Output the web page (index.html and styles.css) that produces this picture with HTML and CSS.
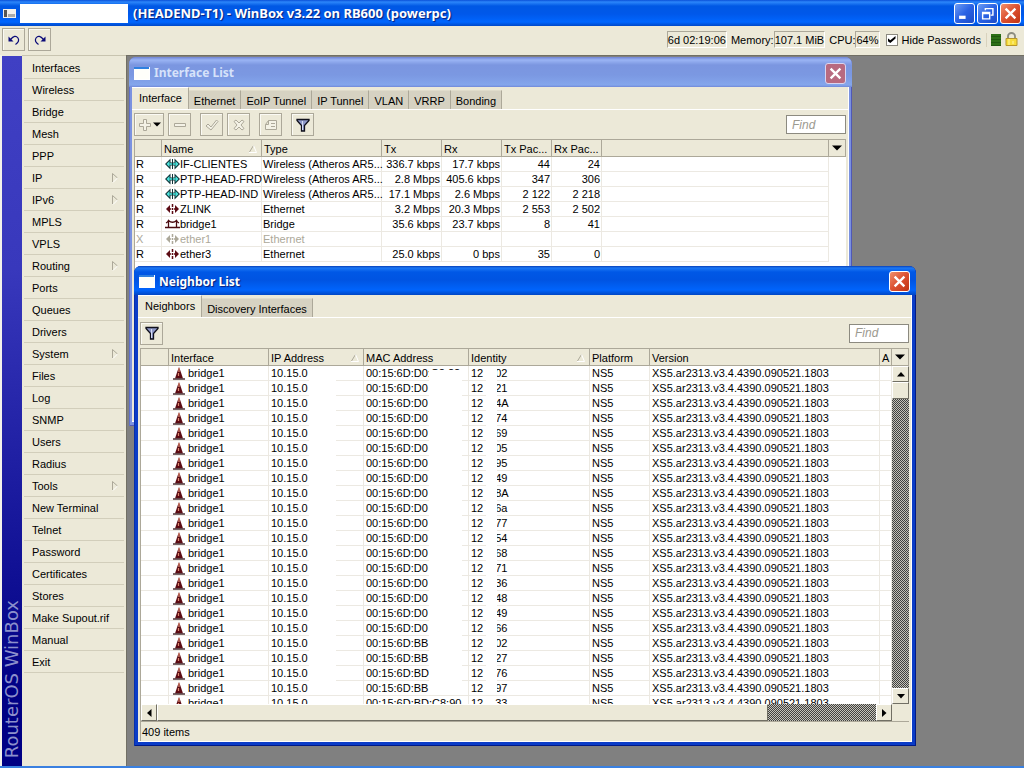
FILE: index.html
```html
<!DOCTYPE html>
<html lang="en">
<head>
<meta charset="utf-8">
<title>(HEADEND-T1) - WinBox v3.22 on RB600 (powerpc)</title>
<link rel="stylesheet" href="styles.css">
</head>
<body>
<svg class="defs" aria-hidden="true">
  <symbol id="i-close" viewBox="0 0 12 12"><path d="M1.5 1.5L10.5 10.5M10.5 1.5L1.5 10.5" stroke="#fff" stroke-width="2.2"/></symbol>
  <symbol id="i-wireless" viewBox="0 0 15 12"><path d="M0 6L5.500 .5V4.500h4V.5L15 6l-5.500 5.500V7.500h-4v4z" fill="#103438"/><path d="M1.500 6L4.500 3v6zM13.500 6l-3-3v6z" fill="#4ae4dc"/><path d="M4.500 6h6" stroke="#4ae4dc" stroke-width="1.600"/><path d="M7.500 1v10" stroke="#103438"/></symbol>
  <symbol id="i-ether" viewBox="0 0 15 12"><path d="M1 6l4-4v8zM14 6l-4-4v8z" fill="currentColor"/><path d="M4 6h2M9 6h2M7.500 1v3M7.500 5v2M7.500 8v3" stroke="currentColor" stroke-width="1.500"/></symbol>
  <symbol id="i-bridge" viewBox="0 0 15 12"><path d="M0 9.500h15M3.500 2v7.500M11.500 2v7.500M1 5Q3 4 3.500 2.500Q7.500 6 11.500 2.500Q12 4 14 5" fill="none" stroke="#4a0a0e" stroke-width="1.300"/></symbol>
  <symbol id="i-tower" viewBox="0 0 12 13"><path d="M6 0L4.500 4 2 11.500h8L7.500 4z" fill="#5c0c14"/><path d="M0 12h12" stroke="#4a3034" stroke-width="1.500"/><path d="M6 1v4M5.500 6v3" stroke="#e08a70" stroke-width="1.200"/></symbol>
  <symbol id="i-filter" viewBox="0 0 14 14"><path d="M1 1.500h12v1L8.500 7.500v5.500h-3V7.500L1 2.500z" fill="#8e98c8" stroke="#10101c" stroke-width="1.300"/><path d="M6.500 3v9" stroke="#d6dcf4"/></symbol>
  <symbol id="i-down" viewBox="0 0 10 6"><path d="M0 .5h10L5 5.500z"/></symbol>
  <symbol id="i-sort" viewBox="0 0 8 8"><path d="M0.500 7L4.500 .5" stroke="#aca899"/><path d="M4.500 .5L7.500 7.500H0" stroke="#fff" fill="none"/></symbol>
  <symbol id="i-window" viewBox="0 0 16 13"><path d="M0 0h16v13H0z" fill="#fff"/><path d="M0 0h15v2H0z" fill="#2f80e0"/><path d="M1 2h14v10H1z" fill="#fffffa"/></symbol>
</svg>
<div class="app">
  <header class="titlebar">
    <svg class="app-icon" viewBox="0 0 13 9"><path d="M0 0h13v9H0z" fill="#f2f0ec"/><path d="M1 1h3v7H1z" fill="#555"/><path d="M5 5h7v3H5z" fill="#aaa"/></svg>
    <span class="blank"></span>
    <h1>(HEADEND-T1) - WinBox v3.22 on RB600 (powerpc)</h1>
    <div class="sysbtns">
      <button class="sys" aria-label="Minimize"><svg viewBox="0 0 12 12"><path d="M1 9.500h6" stroke="#fff" stroke-width="3"/></svg></button>
      <button class="sys" aria-label="Restore"><svg viewBox="0 0 12 12"><path d="M4 3V1.500h7v6H9M1.500 5h6.500v6H1.500z M1.500 6h6" fill="none" stroke="#fff" stroke-width="1.300"/></svg></button>
      <button class="sys red" aria-label="Close"><svg viewBox="0 0 12 12"><use href="#i-close"/></svg></button>
    </div>
  </header>

  <div class="topbar">
    <button class="tool" aria-label="Undo"><svg class="i14" viewBox="0 0 14 14"><path d="M3.500 6.500Q8 1 11 5Q13 8.500 8.500 11.500" fill="none" stroke="#0a0a78" stroke-width="1.200"/><path d="M1.500 3.500v5h5z" fill="#0a0a78"/></svg></button>
    <button class="tool" aria-label="Redo"><svg class="i14" viewBox="0 0 14 14"><path d="M10.500 6.500Q6 1 3 5Q1 8.500 5.500 11.500" fill="none" stroke="#0a0a78" stroke-width="1.200"/><path d="M12.500 3.500v5h-5z" fill="#0a0a78"/></svg></button>
    <div class="status">
      <span class="field">6d 02:19:06</span>
      <span class="pair">Memory:<span class="field">107.1 MiB</span></span>
      <span class="pair">CPU:<span class="field">64%</span></span>
      <label class="hide"><input type="checkbox" checked>Hide Passwords</label>
      <span class="led"></span>
      <svg class="lock" viewBox="0 0 13 15"><path d="M3 7V4a3.500 3 0 0 1 7 0v3" fill="none" stroke="#8c8c80" stroke-width="1.800"/><path d="M1 6.500h11v7H1z" fill="#f6dc3c" stroke="#b8962a"/><path d="M4 7v6M8 9v3" stroke="#fff6a0"/></svg>
    </div>
  </div>

  <div class="main">
    <div class="brand"><span>RouterOS WinBox</span></div>
    <nav class="menu" id="menu"></nav>
    <main class="desk">
      <section class="win inactive w-iface">
        <header class="wtitle"><svg class="wicon"><use href="#i-window"/></svg><h2>Interface List</h2><button class="sys red" aria-label="Close"><svg viewBox="0 0 12 12"><use href="#i-close"/></svg></button></header>
        <div class="wbody">
          <div class="tabs"><button class="tab on">Interface</button><button class="tab">Ethernet</button><button class="tab">EoIP Tunnel</button><button class="tab">IP Tunnel</button><button class="tab">VLAN</button><button class="tab">VRRP</button><button class="tab">Bonding</button></div>
          <div class="tools">
            <button class="tool wide" aria-label="Add"><svg class="i14" viewBox="0 0 14 14"><path d="M5.500 1.500h3v4h4v3h-4v4h-3v-4h-4v-3h4z" fill="#f4f2e6" stroke="#aca899"/></svg><svg class="caret"><use href="#i-down"/></svg></button>
            <button class="tool" aria-label="Remove"><svg class="i14" viewBox="0 0 14 14"><path d="M1.500 5.500h11v3h-11z" fill="#f4f2e6" stroke="#aca899"/></svg></button>
            <button class="tool gap" aria-label="Enable"><svg class="i14" viewBox="0 0 14 14"><path d="M1 8l2-2 3 3 5.500-7L13 3.500 6 12z" fill="#f4f2e6" stroke="#aca899"/></svg></button>
            <button class="tool" aria-label="Disable"><svg class="i14" viewBox="0 0 14 14"><path d="M2 3.500L4 2l3 3 3-3 2 1.500L9 7l3 3.500-2 1.500-3-3-3 3-2-1.500L5 7z" fill="#f4f2e6" stroke="#aca899"/></svg></button>
            <button class="tool gap" aria-label="Comment"><svg class="i14" viewBox="0 0 14 14"><path d="M1.500 6.500l3-4h8v9h-11zM1.500 6.500h3v-4M7 5.500h4M7 8.500h4" fill="#f4f2e6" stroke="#aca899"/></svg></button>
            <button class="tool filter" aria-label="Filter"><svg class="i14"><use href="#i-filter"/></svg></button>
            <input class="find" type="text" placeholder="Find" aria-label="Find interface">
          </div>
          <div class="list">
            <table class="grid">
              <colgroup><col class="c27"><col class="c100"><col class="c120"><col class="c60"><col class="c60"><col class="c50"><col class="c50"><col></colgroup>
              <thead><tr><th></th><th>Name<svg class="sort"><use href="#i-sort"/></svg></th><th>Type</th><th>Tx</th><th>Rx</th><th>Tx Pac...</th><th>Rx Pac...</th><th></th></tr></thead>
              <tbody id="ifaces"></tbody>
            </table>
            <button class="colmenu" aria-label="Columns"><svg><use href="#i-down"/></svg></button>
          </div>
        </div>
      </section>

      <section class="win w-neigh">
        <header class="wtitle"><svg class="wicon"><use href="#i-window"/></svg><h2>Neighbor List</h2><button class="sys red" aria-label="Close"><svg viewBox="0 0 12 12"><use href="#i-close"/></svg></button></header>
        <div class="wbody">
          <div class="tabs"><button class="tab on">Neighbors</button><button class="tab">Discovery Interfaces</button></div>
          <div class="tools">
            <button class="tool" aria-label="Filter"><svg class="i14"><use href="#i-filter"/></svg></button>
            <input class="find" type="text" placeholder="Find" aria-label="Find neighbor">
          </div>
          <div class="list">
            <div class="view">
              <table class="grid">
                <colgroup><col class="c28"><col class="c100"><col class="c95"><col class="c105"><col class="c121"><col class="c60"><col><col class="c12"></colgroup>
                <thead><tr><th></th><th>Interface</th><th>IP Address<svg class="sort"><use href="#i-sort"/></svg></th><th>MAC Address</th><th>Identity<svg class="sort"><use href="#i-sort"/></svg></th><th>Platform</th><th>Version</th><th>A</th></tr></thead>
                <tbody id="neighbors"></tbody>
              </table>
              <span class="mask m-ip"></span><span class="mask m-mac"></span><span class="mask m-id"></span>
            </div>
            <button class="colmenu" aria-label="Columns"><svg><use href="#i-down"/></svg></button>
            <div class="vscroll"><button class="arrow" aria-label="Up"><svg viewBox="0 0 8 5"><path d="M4 0L8 4.500H0z"/></svg></button><div class="thumb"></div><div class="track"></div><button class="arrow" aria-label="Down"><svg viewBox="0 0 8 5"><path d="M0 0h8L4 4.500z"/></svg></button></div>
            <div class="hscroll"><button class="arrow" aria-label="Left"><svg class="side" viewBox="0 0 5 8"><path d="M4.500 0v8L0 4z"/></svg></button><div class="thumb"></div><div class="track"></div><button class="arrow" aria-label="Right"><svg class="side" viewBox="0 0 5 8"><path d="M0 0v8l4.500-4z"/></svg></button></div>
          </div>
          <footer class="items">409 items</footer>
        </div>
      </section>
    </main>
  </div>
</div>
<script src="app.js"></script>
</body>
</html>
```

FILE: styles.css
```css
* { box-sizing: border-box; }
body {
  margin: 0;
  font: 11px/14px "Liberation Sans", Arial, sans-serif;
  color: #000;
}
button, input { font: inherit; color: inherit; margin: 0; padding: 0; border-radius: 0; }
svg { display: block; }
.defs { position: absolute; width: 0; height: 0; }
h1, h2 {
  margin: 0;
  font: bold 12px/16px "Noto Sans", "Open Sans", sans-serif;
  color: #fff;
  text-shadow: 1px 1px 1px #0a1e78;
  white-space: nowrap;
}
h1 { font-size: 13px; }
.app {
  display: flex;
  flex-direction: column;
  height: 100vh;
  overflow: hidden;
  background: #ece9d8;
  border-bottom: 2px solid #3a80e0;
}

.titlebar {
  display: flex;
  align-items: center;
  height: 26px;
  flex: none;
  padding: 0 3px;
  background: linear-gradient(#0a50d8 0, #2c86fa 2px, #0058e4 6px, #0058ea 14px, #0066ff 22px, #0048c8 26px);
}
.app-icon { width: 13px; height: 9px; }
.blank { width: 108px; height: 19px; margin: 0 5px 0 4px; background: #fff; }
.sysbtns { display: flex; gap: 2px; margin-left: auto; }
.sys {
  display: flex;
  align-items: center;
  justify-content: center;
  width: 21px;
  height: 21px;
  border: 1px solid #fff;
  border-radius: 3px;
  background: linear-gradient(135deg, #6c9cf4, #2a62e4 50%, #1c4cc8);
}
.sys svg { width: 13px; height: 13px; }
.sys.red { background: linear-gradient(135deg, #f0906c, #dc5030 50%, #c03414); }

.topbar {
  display: flex;
  align-items: center;
  gap: 3px;
  height: 29px;
  flex: none;
  padding: 0 6px 2px 2px;
}
.tool {
  display: flex;
  align-items: center;
  justify-content: center;
  width: 23px;
  height: 23px;
  border: 1px solid #aca899;
  background: #ece9d8;
  box-shadow: inset 1px 1px 0 #fbfaf4;
}
.i14 { width: 14px; height: 14px; }
.status { display: flex; align-items: center; gap: 4px; margin-left: auto; }
.pair { display: flex; align-items: center; }
.field {
  height: 17px;
  padding: 1px 0 0;
  border: 1px solid;
  border-color: #aca899 #fff #fff #aca899;
  white-space: nowrap;
}
.hide { display: flex; align-items: center; gap: 4px; padding: 0 5px 0 2px; border-right: 1px solid #d8d2bd; }
.hide input {
  appearance: none;
  display: grid;
  place-items: center;
  width: 12px;
  height: 12px;
  border: 1px solid #8c8a80;
  background: #fff;
}
.hide input:checked::after {
  content: "";
  width: 8px;
  height: 7px;
  background: #000;
  clip-path: polygon(0 30%, 35% 60%, 100% 0, 100% 35%, 35% 100%, 0 70%);
}
.led { width: 10px; height: 12px; background: repeating-linear-gradient(#2d7016 0 2px, #205a10 2px 3px); }
.lock { width: 13px; height: 15px; }

.main { display: flex; flex: 1; min-height: 0; border-left: 2px solid #f4f2ea; }
.brand {
  display: flex;
  align-items: flex-end;
  justify-content: center;
  width: 20px;
  flex: none;
  padding-bottom: 8px;
  margin-top: 1px;
  background: linear-gradient(#4040c4, #3838bc 30%, #000084 90%);
}
.brand span {
  writing-mode: vertical-rl;
  rotate: 180deg;
  font: 18px/20px "DejaVu Sans", sans-serif;
  color: #8c90cc;
  white-space: nowrap;
}
.menu { width: 104px; flex: none; padding: 1px 2px 0; border-top: 1px solid #c8c4b0; }
.menu button {
  display: flex;
  justify-content: space-between;
  align-items: center;
  width: 100%;
  height: 22px;
  padding: 0 6px 0 8px;
  border: 0;
  border-bottom: 1px solid #d2cebb;
  background: none;
  text-align: left;
}
.menu svg { width: 6px; height: 10px; }
.desk {
  position: relative;
  flex: 1;
  overflow: hidden;
  background: #808080;
  border: 1px solid #716f64;
  border-width: 1px 0 0 1px;
}

.win {
  position: absolute;
  display: flex;
  flex-direction: column;
  padding: 0 4px 4px;
  border-radius: 7px 7px 0 0;
  background: #0a3cc8;
  box-shadow: inset 1px 0 #0830a8, inset -1px -1px #001a88;
}
.w-iface { left: 2px; top: 1px; width: 723px; height: 369px; }
.w-neigh { left: 7px; top: 210px; width: 782px; height: 480px; }
.inactive { padding: 0 3px 4px; background: #7b92e0; box-shadow: inset 1px 0 #6070c8, inset -1px -1px #5058b8; }
.wtitle {
  display: flex;
  align-items: center;
  gap: 4px;
  height: 29px;
  flex: none;
  margin: 0 -4px;
  padding: 2px 6px 0 5px;
  border-radius: 7px 7px 0 0;
  background: linear-gradient(#0840b8 0, #1c78f4 2px, #0058e6 6px, #0054e2 14px, #0064fc 24px, #0046c4 29px);
}
.inactive .wtitle {
  height: 30px;
  margin: 0 -3px;
  background: linear-gradient(#7084d4 0, #9ab4f4 3px, #7b96e0 8px, #7b98e2 18px, #84a6ec 28px, #7088d8 30px);
}
.inactive h2 { color: #d6e2fa; text-shadow: none; }
.wicon { width: 16px; height: 13px; }
.wtitle .sys { margin-left: auto; }
.inactive .sys { background: #b86a80; border-color: #d8d4f0; }
.wbody {
  display: flex;
  flex-direction: column;
  flex: 1;
  min-height: 0;
  background: #ece9d8;
  border-right: 1px solid #fff;
  border-bottom: 1px solid #fff;
}
.tabs {
  display: flex;
  align-items: flex-end;
  height: 23px;
  flex: none;
  border-bottom: 1px solid #fff;
}
.tab {
  height: 19px;
  padding: 1px 5px 0;
  border: 0;
  border-right: 1px solid #aca899;
  border-top: 1px solid #e0dccb;
  background: #d6d2c2;
  white-space: nowrap;
}
.tab.on {
  height: 22px;
  padding: 0 6px 1px 7px;
  border-color: #fff #aca899 #fff #fff;
  background: #ece9d8;
}
.tools { display: flex; align-items: center; gap: 4px; height: 30px; flex: none; padding: 0 2px; }
.inactive .tools { height: 29px; }
.tool.wide { width: 30px; gap: 1px; }
.tool.gap { margin-left: 5px; }
.tool.filter { margin-left: 5px; }
.caret { width: 8px; height: 5px; }
.find {
  width: 60px;
  height: 19px;
  margin-left: auto;
  padding: 0 5px;
  border: 1px solid #8c8a80;
  background: #fff;
}
.find::placeholder { color: #9c9a90; font-style: italic; font-size: 12px; opacity: 1; }

.list {
  position: relative;
  display: grid;
  grid-template-columns: 1fr 17px;
  grid-template-rows: 18px 1fr auto;
  flex: 1;
  min-height: 0;
  margin: 0 2px;
  background: #fff;
  border-left: 1px solid #aca899;
}
.view { position: relative; grid-row: 1 / 3; overflow: hidden; min-height: 0; }
.grid {
  grid-row: 1 / 3;
  align-self: start;
  width: 100%;
  table-layout: fixed;
  border-spacing: 0;
}
.c12 { width: 12px; }
.c27 { width: 27px; }
.c28 { width: 28px; }
.c50 { width: 50px; }
.c60 { width: 60px; }
.c95 { width: 95px; }
.c100 { width: 100px; }
.c105 { width: 105px; }
.c120 { width: 120px; }
.c121 { width: 121px; }
.grid th {
  position: relative;
  height: 18px;
  padding: 2px 0 0 2px;
  border: 1px solid #aca899;
  border-width: 1px 1px 1px 0;
  background: #ece9d8;
  font-weight: normal;
  text-align: left;
  white-space: nowrap;
}
.inactive .grid th { padding-top: 1px; }
.sort { position: absolute; right: 4px; top: 5px; width: 8px; height: 8px; }
.grid td {
  height: 15px;
  padding: 0 1px;
  border: 1px solid #ece9e2;
  border-width: 0 1px 1px 0;
  white-space: nowrap;
}
.w-neigh .grid td { padding-left: 2px; }
.grid td.n { text-align: right; }
.off { color: #aca899; }
.cell { display: flex; align-items: center; height: 14px; padding-left: 2px; }
.cell svg { width: 15px; height: 12px; flex: none; color: #5c0c14; }
.off .cell svg { color: #aca899; }
.cell svg.tower { width: 12px; height: 13px; margin-right: 3px; }
.tail { margin-left: 12px; }
.colmenu {
  display: flex;
  align-items: center;
  justify-content: center;
  border: 1px solid #aca899;
  border-left: 0;
  background: #ece9d8;
}
.colmenu svg { width: 10px; height: 6px; }
.vscroll { grid-column: 2; display: flex; flex-direction: column; }
.hscroll { grid-column: 1 / 3; display: flex; height: 17px; padding-right: 17px; background: #ece9d8; }
.arrow, .thumb {
  border: 1px solid;
  border-color: #fff #716f64 #716f64 #fff;
  background: #ece9d8;
}
.arrow { display: grid; place-items: center; width: 17px; height: 16px; flex: none; }
.hscroll .arrow { width: 16px; height: 17px; }
.arrow svg { width: 8px; height: 5px; }
.arrow .side { width: 5px; height: 8px; }
.vscroll .thumb { height: 17px; }
.hscroll .thumb { flex: 17; }
.track {
  flex: 1;
  background: repeating-conic-gradient(#404040 0 25%, #c4c2b8 0 50%) 0 0 / 2px 2px;
}
.hscroll .track { flex: 3; }
.items { height: 20px; flex: none; margin: 0 2px; padding: 3px 1px; border: 1px solid #aca899; border-width: 1px 0 0 1px; }

.mask { position: absolute; background: #fff; }
.m-ip { left: 168px; top: 20px; bottom: 17px; width: 27px; }
.m-mac { left: 288px; top: 22px; bottom: 9px; width: 33px; }
.m-id { left: 345px; top: 18px; bottom: 9px; width: 11px; }
```

FILE: app.js
```js
const icon = (name, cls = "") => `<svg class="${cls}"><use href="#i-${name}"/></svg>`;

const menu = ["Interfaces", "Wireless", "Bridge", "Mesh", "PPP", "IP>", "IPv6>", "MPLS", "VPLS", "Routing>", "Ports",
  "Queues", "Drivers", "System>", "Files", "Log", "SNMP", "Users", "Radius", "Tools>", "New Terminal", "Telnet",
  "Password", "Certificates", "Stores", "Make Supout.rif", "Manual", "Exit"];
const arrow = '<svg viewBox="0 0 6 10"><path d="M.5 9V.5L5.500 5" fill="none" stroke="#aca899"/><path d="M5.500 5L1 9.500" stroke="#fff"/></svg>';
document.getElementById("menu").innerHTML = menu
  .map(m => `<button>${m.replace(">", "")}${m.endsWith(">") ? arrow : ""}</button>`).join("");

const ifaces = [
  ["R", "wireless", "IF-CLIENTES", "Wireless (Atheros AR5...", "336.7 kbps", "17.7 kbps", "44", "24"],
  ["R", "wireless", "PTP-HEAD-FRD", "Wireless (Atheros AR5...", "2.8 Mbps", "405.6 kbps", "347", "306"],
  ["R", "wireless", "PTP-HEAD-IND", "Wireless (Atheros AR5...", "17.1 Mbps", "2.6 Mbps", "2 122", "2 218"],
  ["R", "ether", "ZLINK", "Ethernet", "3.2 Mbps", "20.3 Mbps", "2 553", "2 502"],
  ["R", "bridge", "bridge1", "Bridge", "35.6 kbps", "23.7 kbps", "8", "41"],
  ["X", "ether", "ether1", "Ethernet", "", "", "", ""],
  ["R", "ether", "ether3", "Ethernet", "25.0 kbps", "0 bps", "35", "0"]
];
document.getElementById("ifaces").innerHTML = ifaces.map(([flag, ic, name, type, ...nums]) =>
  `<tr class="${flag === "X" ? "off" : ""}"><td>${flag}</td><td><div class="cell">${icon(ic)}${name}</div></td><td>${type}</td>` +
  nums.map(n => `<td class="n">${n}</td>`).join("") + "<td></td></tr>").join("");

const ids = ["02", "21", "4A", "74", "69", "05", "95", "49", "8A", "6a", "77", "54", "68", "71", "36", "48", "49",
  "66", "02", "27", "76", "97", "33"];
const macs = { 0: "D0:C2:22", 18: "BB", 19: "BB", 20: "BD", 21: "BB", 22: "BD:C8:90" };
document.getElementById("neighbors").innerHTML = ids.map((id, i) =>
  `<tr><td></td><td><div class="cell">${icon("tower", "tower")}bridge1</div></td><td>10.15.0</td>` +
  `<td>00:15:6D:${macs[i] || "D0"}</td><td>12<span class="tail">${id}</span></td><td>NS5</td>` +
  "<td>XS5.ar2313.v3.4.4390.090521.1803</td><td></td></tr>").join("");
```
